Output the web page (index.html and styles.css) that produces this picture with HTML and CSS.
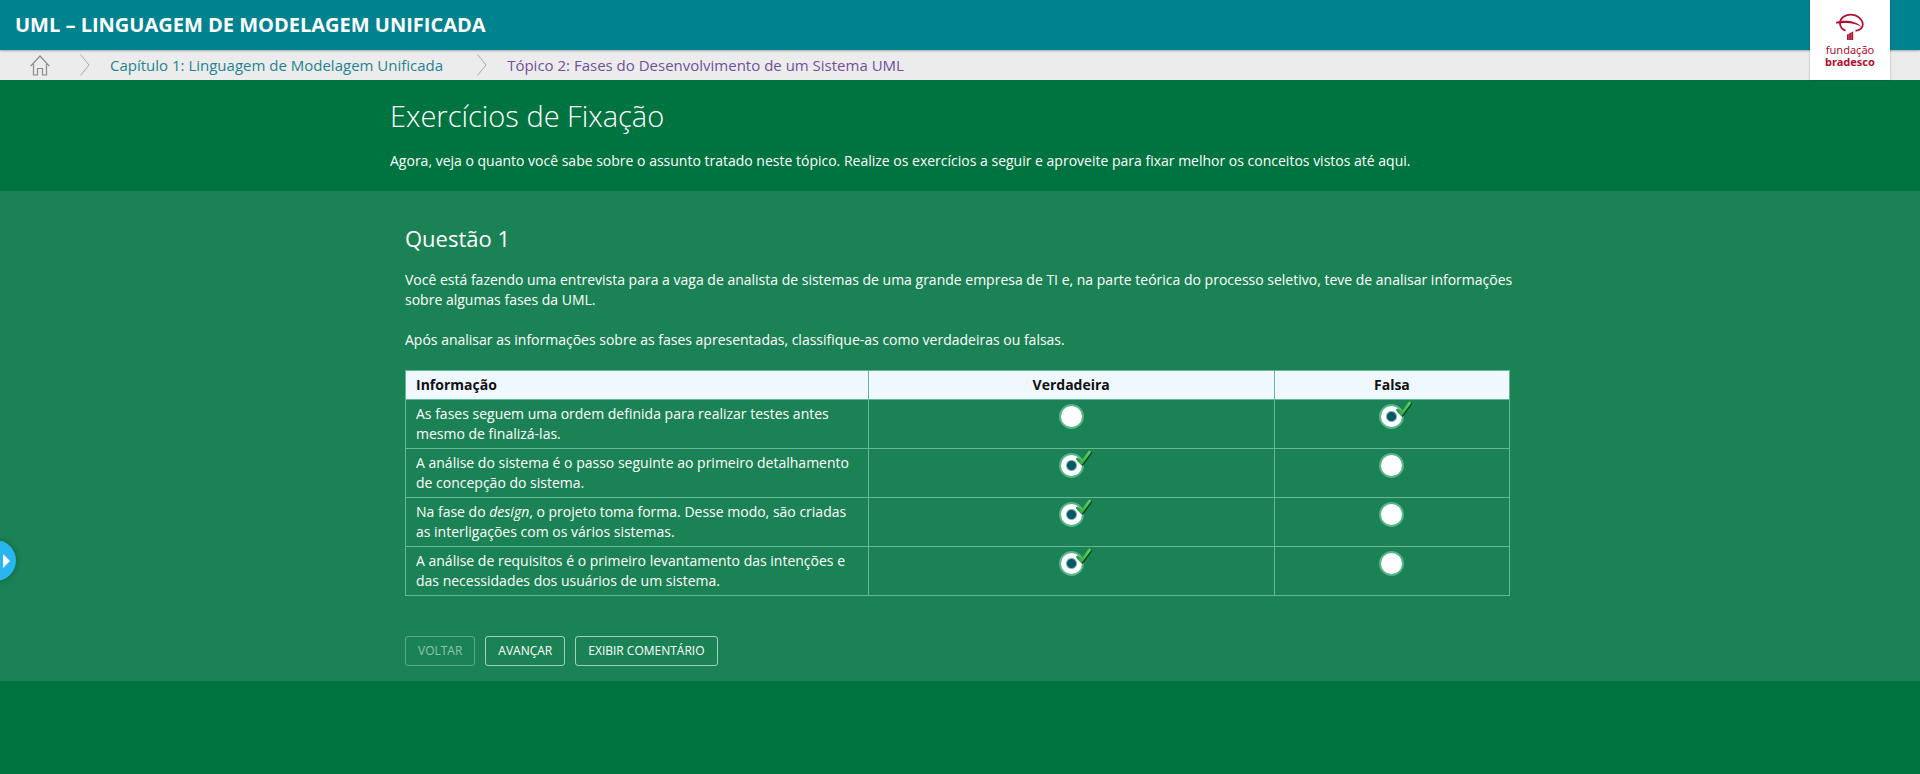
FILE: index.html
```html
<!DOCTYPE html>
<html lang="pt-BR">
<head>
<meta charset="utf-8">
<title>UML – Linguagem de Modelagem Unificada</title>
<link rel="stylesheet" href="styles.css">
</head>
<body>
<svg class="sprite" aria-hidden="true">
  <defs>
    <linearGradient id="leaf" x1="0" y1="0" x2="1" y2="0">
      <stop offset="0" stop-color="#22a43a"/>
      <stop offset="1" stop-color="#5bd35b"/>
    </linearGradient>
    <symbol id="tick" viewBox="0 0 18 17">
      <path d="M3.500 10 7.500 14.200 15.600 3" fill="none" stroke="#0b3a20" stroke-width="2.800" stroke-linecap="round" stroke-linejoin="round" opacity=".9"/>
      <path d="M2.500 9 6.500 12.800 14.600 2" fill="none" stroke="url(#leaf)" stroke-width="2.800" stroke-linecap="round"/>
    </symbol>
  </defs>
</svg>

<header class="topbar">
  <h1 class="topbar-title">UML – LINGUAGEM DE MODELAGEM UNIFICADA</h1>
  <a class="brand" href="#" aria-label="Fundação Bradesco">
    <svg class="brand-mark" viewBox="0 0 30 28" aria-hidden="true">
      <path d="M1 8.800C9 6.800 21 7 26.500 14c-6-4-14-4.600-25.500-3.400z" fill="#b01030"/>
      <path d="M8.500 3.800C14 .2 22 1.200 26 6.500c4 5.500 1 10.500-5.500 11.300M8.500 3.800C4 7 3 14.500 10.500 17.800" fill="none" stroke="#b01030" stroke-width="1.800"/>
      <path d="M12 21.500l1.800-.7V27H12zM14.100 20.500l1.800-.9V27h-1.800zM16.200 19.400l2-1.200V27h-2z" fill="#b01030"/>
    </svg>
    <span class="brand-name">fundação</span>
    <span class="brand-name brand-strong">bradesco</span>
  </a>
</header>

<nav class="crumbs" aria-label="Navegação">
  <a class="crumb-home" href="#" aria-label="Início">
    <svg width="20" height="21" viewBox="0 0 20 21" fill="none" stroke="#8a8a8a" stroke-width="1.200" aria-hidden="true"><path d="M.6 11.200 10 1l9.400 10.200M3.500 9v11h4v-6.500h5V20h4V9"/></svg>
  </a>
  <svg class="crumb-sep" width="10" height="22" viewBox="0 0 10 22" fill="none" stroke="#aaa" aria-hidden="true"><path d="M.5.5 9 11 .5 21.500"/></svg>
  <a class="crumb" href="#">Capítulo 1: Linguagem de Modelagem Unificada</a>
  <svg class="crumb-sep" width="10" height="22" viewBox="0 0 10 22" fill="none" stroke="#aaa" aria-hidden="true"><path d="M.5.5 9 11 .5 21.500"/></svg>
  <a class="crumb crumb-visited" href="#">Tópico 2: Fases do Desenvolvimento de um Sistema UML</a>
</nav>

<main>
  <section class="intro">
    <div class="container">
      <h2 class="intro-title">Exercícios de Fixação</h2>
      <p class="text">Agora, veja o quanto você sabe sobre o assunto tratado neste tópico. Realize os exercícios a seguir e aproveite para fixar melhor os conceitos vistos até aqui.</p>
    </div>
  </section>

  <section class="question">
    <form class="container question-body">
      <h3 class="question-title">Questão 1</h3>
      <p class="text">Você está fazendo uma entrevista para a vaga de analista de sistemas de uma grande empresa de TI e, na parte teórica do processo seletivo, teve de analisar informações sobre algumas fases da UML.</p>
      <p class="text">Após analisar as informações sobre as fases apresentadas, classifique-as como verdadeiras ou falsas.</p>

      <table class="answers">
        <colgroup><col class="col-info"><col class="col-true"><col class="col-false"></colgroup>
        <thead>
          <tr><th scope="col" class="info">Informação</th><th scope="col">Verdadeira</th><th scope="col">Falsa</th></tr>
        </thead>
        <tbody>
          <tr>
            <td class="info">As fases seguem uma ordem definida para realizar testes antes mesmo de finalizá-las.</td>
            <td><label class="choice"><input type="radio" name="q1" aria-label="Verdadeira"></label></td>
            <td><label class="choice"><input type="radio" name="q1" aria-label="Falsa" checked><svg class="tick" aria-hidden="true"><use href="#tick"/></svg></label></td>
          </tr>
          <tr>
            <td class="info">A análise do sistema é o passo seguinte ao primeiro detalhamento de concepção do sistema.</td>
            <td><label class="choice"><input type="radio" name="q2" aria-label="Verdadeira" checked><svg class="tick" aria-hidden="true"><use href="#tick"/></svg></label></td>
            <td><label class="choice"><input type="radio" name="q2" aria-label="Falsa"></label></td>
          </tr>
          <tr>
            <td class="info">Na fase do <em>design</em>, o projeto toma forma. Desse modo, são criadas as interligações com os vários sistemas.</td>
            <td><label class="choice"><input type="radio" name="q3" aria-label="Verdadeira" checked><svg class="tick" aria-hidden="true"><use href="#tick"/></svg></label></td>
            <td><label class="choice"><input type="radio" name="q3" aria-label="Falsa"></label></td>
          </tr>
          <tr>
            <td class="info">A análise de requisitos é o primeiro levantamento das intenções e das necessidades dos usuários de um sistema.</td>
            <td><label class="choice"><input type="radio" name="q4" aria-label="Verdadeira" checked><svg class="tick" aria-hidden="true"><use href="#tick"/></svg></label></td>
            <td><label class="choice"><input type="radio" name="q4" aria-label="Falsa"></label></td>
          </tr>
        </tbody>
      </table>

      <div class="actions">
        <button class="btn" type="button" disabled>VOLTAR</button>
        <button class="btn" type="button">AVANÇAR</button>
        <button class="btn" type="button">EXIBIR COMENTÁRIO</button>
      </div>
    </form>
  </section>
</main>

<button class="drawer" type="button" aria-label="Abrir menu">
  <svg width="7" height="14" viewBox="0 0 7 14" aria-hidden="true"><path d="M0 0l7 7-7 7z" fill="#fff"/></svg>
</button>
</body>
</html>
```
FILE: styles.css
```css
* { box-sizing: border-box; }

body {
  margin: 0;
  min-height: 100vh;
  background: #007440;
  color: #fff;
  font: 14px/20px "Open Sans", "Noto Sans", sans-serif;
}

h1, h2, h3, p { margin: 0; }

.sprite { position: absolute; width: 0; height: 0; }

.topbar {
  position: relative;
  z-index: 1;
  display: flex;
  align-items: center;
  height: 50px;
  padding: 0 15px;
  background: #00838f;
  box-shadow: 0 1px 2px rgba(0, 0, 0, .3);
}

.topbar-title { font-size: 20px; line-height: 28px; font-weight: 700; }

.brand {
  position: absolute;
  top: 0;
  right: 30px;
  display: flex;
  flex-direction: column;
  align-items: center;
  width: 80px;
  height: 80px;
  padding-top: 13px;
  background: #fff;
  color: #b01030;
  text-decoration: none;
  box-shadow: 0 0 2px rgba(0, 0, 0, .3);
}

.brand-mark { width: 30px; height: 28px; margin-bottom: 3px; }
.brand-name { font: 11px/12px "Noto Sans", sans-serif; }
.brand-strong { font-weight: 700; }

.crumbs {
  display: flex;
  align-items: center;
  height: 30px;
  padding-left: 30px;
  background: #ececec;
}

.crumb-home { display: flex; margin-right: 30px; }
.crumb-sep { margin-right: 20px; }
.crumb {
  margin-right: 34px;
  color: #1f8391;
  font-size: 15px;
  text-decoration: none;
}
.crumb-visited { color: #71509a; }

.container { width: 100%; max-width: 1140px; margin: 0 auto; }

.intro { padding: 16px 0 20px; }
.intro-title {
  margin-bottom: 15px;
  font-size: 29px;
  line-height: 40px;
  font-weight: 300;
}

.question { background: #1b8255; }
.question-body { padding: 32px 15px 15px; }
.question-title {
  margin-bottom: 17px;
  font-size: 22px;
  line-height: 30px;
  font-weight: 400;
}
.question .text { margin-bottom: 20px; }

.answers {
  width: calc(100% - 5px);
  border-collapse: collapse;
  table-layout: fixed;
}
.col-info { width: 41.9%; }
.col-true { width: 36.8%; }
.answers th, .answers td {
  padding: 4px 10px;
  border: 1px solid #66b894;
  text-align: center;
  vertical-align: top;
}
.answers th { background: #f0f8ff; color: #111; font-weight: 700; }
.answers .info { text-align: left; }

.choice { position: relative; display: inline-flex; }
.choice input {
  appearance: none;
  width: 25px;
  height: 25px;
  margin: 0;
  border: 2px solid #57b38a;
  border-radius: 50%;
  background: #fff;
}
.choice input:checked {
  background: radial-gradient(circle, #005a66 4px, #fff 6px);
}
.tick {
  position: absolute;
  top: -3px;
  left: 16px;
  width: 18px;
  height: 17px;
}

.actions { display: flex; gap: 10px; margin-top: 40px; }
.btn {
  height: 30px;
  padding: 0 12px;
  border: 1px solid rgba(255, 255, 255, .6);
  border-radius: 3px;
  background: transparent;
  color: #fff;
  font: 12px/20px "Open Sans", "Noto Sans", sans-serif;
}
.btn:disabled { opacity: .5; }

.drawer {
  position: fixed;
  top: 540px;
  left: -25px;
  display: flex;
  align-items: center;
  justify-content: flex-end;
  width: 41px;
  height: 41px;
  padding: 0 6px 0 0;
  border: 0;
  border-radius: 50%;
  background: #29b6f0;
  box-shadow: 0 0 6px rgba(0, 0, 0, .3);
}
```
